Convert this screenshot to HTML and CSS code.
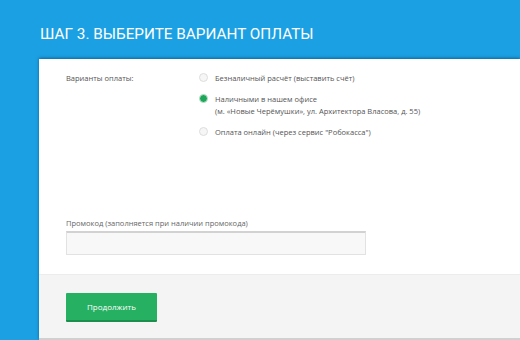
FILE: index.html
```html
<!DOCTYPE html>
<html lang="ru">
<head>
    <meta charset="UTF-8" />
    <title>Шаг 3. Выберите вариант оплаты</title>
    <link rel="stylesheet" href="styles.css">
</head>
<body>
<h2 class="step-title">Шаг 3. Выберите вариант оплаты</h2>
<form class="card">
    <div class="card-body">
        <div class="pay-row">
            <div class="pay-label">Варианты оплаты:</div>
            <div class="pay-options">
                <label class="option"><span class="radio"></span><span>Безналичный расчёт (выставить счёт)</span></label>
                <label class="option"><span class="radio checked"></span><span>Наличными в нашем офисе<br>(м. «Новые Черёмушки», ул. Архитектора Власова, д. 55)</span></label>
                <label class="option"><span class="radio"></span><span>Оплата онлайн (через сервис "Робокасса")</span></label>
            </div>
        </div>
        <div class="promo">
            <div class="promo-label">Промокод (заполняется при наличии промокода)</div>
            <input type="text" class="promo-input" />
        </div>
    </div>
    <div class="card-footer">
        <button type="button" class="btn">Продолжить</button>
    </div>
</form>
</body>
</html>
```

FILE: styles.css
```css
body {
    margin: 0;
    background: #1ba1e3;
    font-family: "Open Sans", sans-serif;
    height: 340px;
    overflow: hidden;
}
.step-title {
    margin: 0;
    padding: 26px 0 0 40px;
    height: 33px;
    color: #fff;
    font-family: Roboto, sans-serif;
    font-weight: 400;
    font-size: 15.3px;
    text-transform: uppercase;
    line-height: 16px;
}
.card {
    margin-left: 39px;
    background: #fff;
    box-shadow: 0 -1px 3px rgba(0, 40, 80, 0.5);
}
.card-body {
    padding: 13px 0 0 27px;
    height: 215px;
    box-sizing: border-box;
}
.pay-row {
    display: flex;
}
.pay-label {
    width: 133px;
    font-size: 7.5px;
    color: #555;
    padding-top: 1px;
}
.pay-options {
    display: flex;
    flex-direction: column;
    gap: 9px;
}
.option {
    display: flex;
    gap: 7px;
    font-size: 7.5px;
    line-height: 12px;
    color: #555;
}
.radio {
    width: 7px;
    height: 7px;
    border-radius: 50%;
    border: 1px solid #ddd;
    background: #f6f6f6;
    margin-top: 1px;
    flex: none;
}
.radio.checked {
    background: #1fa65a;
    border-color: #bfe5cd;
}
.promo {
    margin-top: 80px;
}
.promo-label {
    font-size: 7.5px;
    color: #666;
    margin-bottom: 3px;
}
.promo-input {
    display: block;
    width: 300px;
    height: 24px;
    box-sizing: border-box;
    background: #f8f8f8;
    border: 1px solid #e2e2e2;
    border-top: 2px solid #d2d2d2;
    border-radius: 0;
}
.card-footer {
    background: #f4f4f4;
    border-top: 1px solid #ececec;
    border-bottom: 2px solid #d0d0d0;
    height: 45px;
    padding: 18px 0 0 27px;
}
.btn {
    width: 91px;
    height: 29px;
    background: #25b062;
    color: #fff;
    border: none;
    border-bottom: 2px solid #1c8f4e;
    border-radius: 1px;
    font-family: "Open Sans", sans-serif;
    font-size: 8px;
    cursor: pointer;
}
```
